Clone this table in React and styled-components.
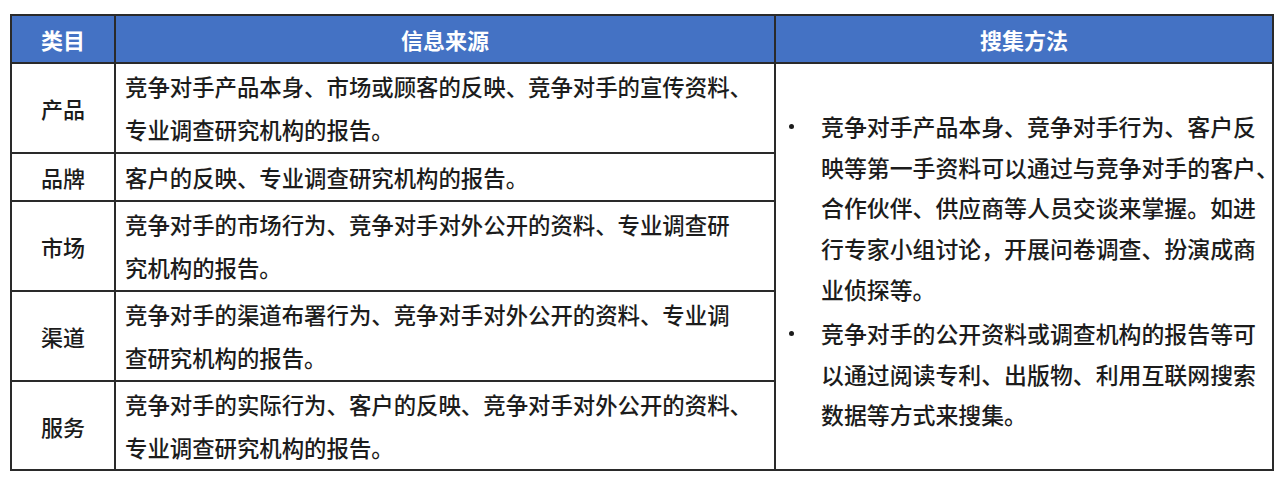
import React from "react";
import styled, { createGlobalStyle } from "styled-components";

const Global = createGlobalStyle`
  html, body { margin: 0; padding: 0; background: #ffffff; }
  body { font-family: "Noto Sans CJK SC", "Noto Sans", sans-serif; color: #1c1c1c; }
`;

const Page = styled.div`
  padding: 14px 10px 0 10px;
`;

const Table = styled.table`
  border-collapse: collapse;
  table-layout: fixed;
  width: 1262px;
  border: 2px solid #2a2a2a;
`;

const HeadCell = styled.th`
  background: #4472c4;
  color: #ffffff;
  font-weight: 700;
  font-size: 22px;
  height: 46px;
  padding: 0;
  text-align: center;
  border: 2px solid #2a2a2a;
  line-height: 1;
`;

const CatCell = styled.td`
  border: 2px solid #2a2a2a;
  text-align: center;
  font-size: 22px;
  font-weight: 500;
  padding: 0;
  height: ${(p) => p.$h}px;
  vertical-align: middle;
`;

const SourceCell = styled.td`
  border: 2px solid #2a2a2a;
  font-size: 22.4px;
  font-weight: 500;
  line-height: 43px;
  padding: 0 0 0 9px;
  height: ${(p) => p.$h}px;
  vertical-align: middle;
`;

const MethodCell = styled.td`
  border: 2px solid #2a2a2a;
  vertical-align: middle;
  padding: 8px 0 0 0;
`;

const Line = styled.span`
  display: block;
  white-space: nowrap;
`;

const Bullets = styled.ul`
  list-style: none;
  margin: 0;
  padding: 0;
  font-size: 22.9px;
  font-weight: 500;
  line-height: 40.6px;
`;

const Bullet = styled.li`
  position: relative;
  padding-left: 45px;
  & + & { margin-top: 4px; }
  &::before {
    content: "";
    position: absolute;
    left: 13px;
    top: 18px;
    width: 5px;
    height: 5px;
    border-radius: 50%;
    background: #1c1c1c;
  }
`;

const rows = [
  { cat: "产品", h: 88, lines: ["竞争对手产品本身、市场或顾客的反映、竞争对手的宣传资料、", "专业调查研究机构的报告。"] },
  { cat: "品牌", h: 46, lines: ["客户的反映、专业调查研究机构的报告。"] },
  { cat: "市场", h: 88, lines: ["竞争对手的市场行为、竞争对手对外公开的资料、专业调查研", "究机构的报告。"] },
  { cat: "渠道", h: 88, lines: ["竞争对手的渠道布署行为、竞争对手对外公开的资料、专业调", "查研究机构的报告。"] },
  { cat: "服务", h: 87, lines: ["竞争对手的实际行为、客户的反映、竞争对手对外公开的资料、", "专业调查研究机构的报告。"] },
];

const methods = [
  [
    "竞争对手产品本身、竞争对手行为、客户反",
    "映等第一手资料可以通过与竞争对手的客户、",
    "合作伙伴、供应商等人员交谈来掌握。如进",
    "行专家小组讨论，开展问卷调查、扮演成商",
    "业侦探等。",
  ],
  [
    "竞争对手的公开资料或调查机构的报告等可",
    "以通过阅读专利、出版物、利用互联网搜索",
    "数据等方式来搜集。",
  ],
];

export default function App() {
  return (
    <Page>
      <Global />
      <Table>
        <colgroup>
          <col style={{ width: 104 }} />
          <col style={{ width: 660 }} />
          <col style={{ width: 498 }} />
        </colgroup>
        <thead>
          <tr>
            <HeadCell>类目</HeadCell>
            <HeadCell>信息来源</HeadCell>
            <HeadCell>搜集方法</HeadCell>
          </tr>
        </thead>
        <tbody>
          {rows.map((r, i) => (
            <tr key={r.cat}>
              <CatCell $h={r.h}>{r.cat}</CatCell>
              <SourceCell $h={r.h}>
                {r.lines.map((l) => (
                  <Line key={l}>{l}</Line>
                ))}
              </SourceCell>
              {i === 0 && (
                <MethodCell rowSpan={rows.length}>
                  <Bullets>
                    {methods.map((m, j) => (
                      <Bullet key={j}>
                        {m.map((l) => (
                          <Line key={l}>{l}</Line>
                        ))}
                      </Bullet>
                    ))}
                  </Bullets>
                </MethodCell>
              )}
            </tr>
          ))}
        </tbody>
      </Table>
    </Page>
  );
}
